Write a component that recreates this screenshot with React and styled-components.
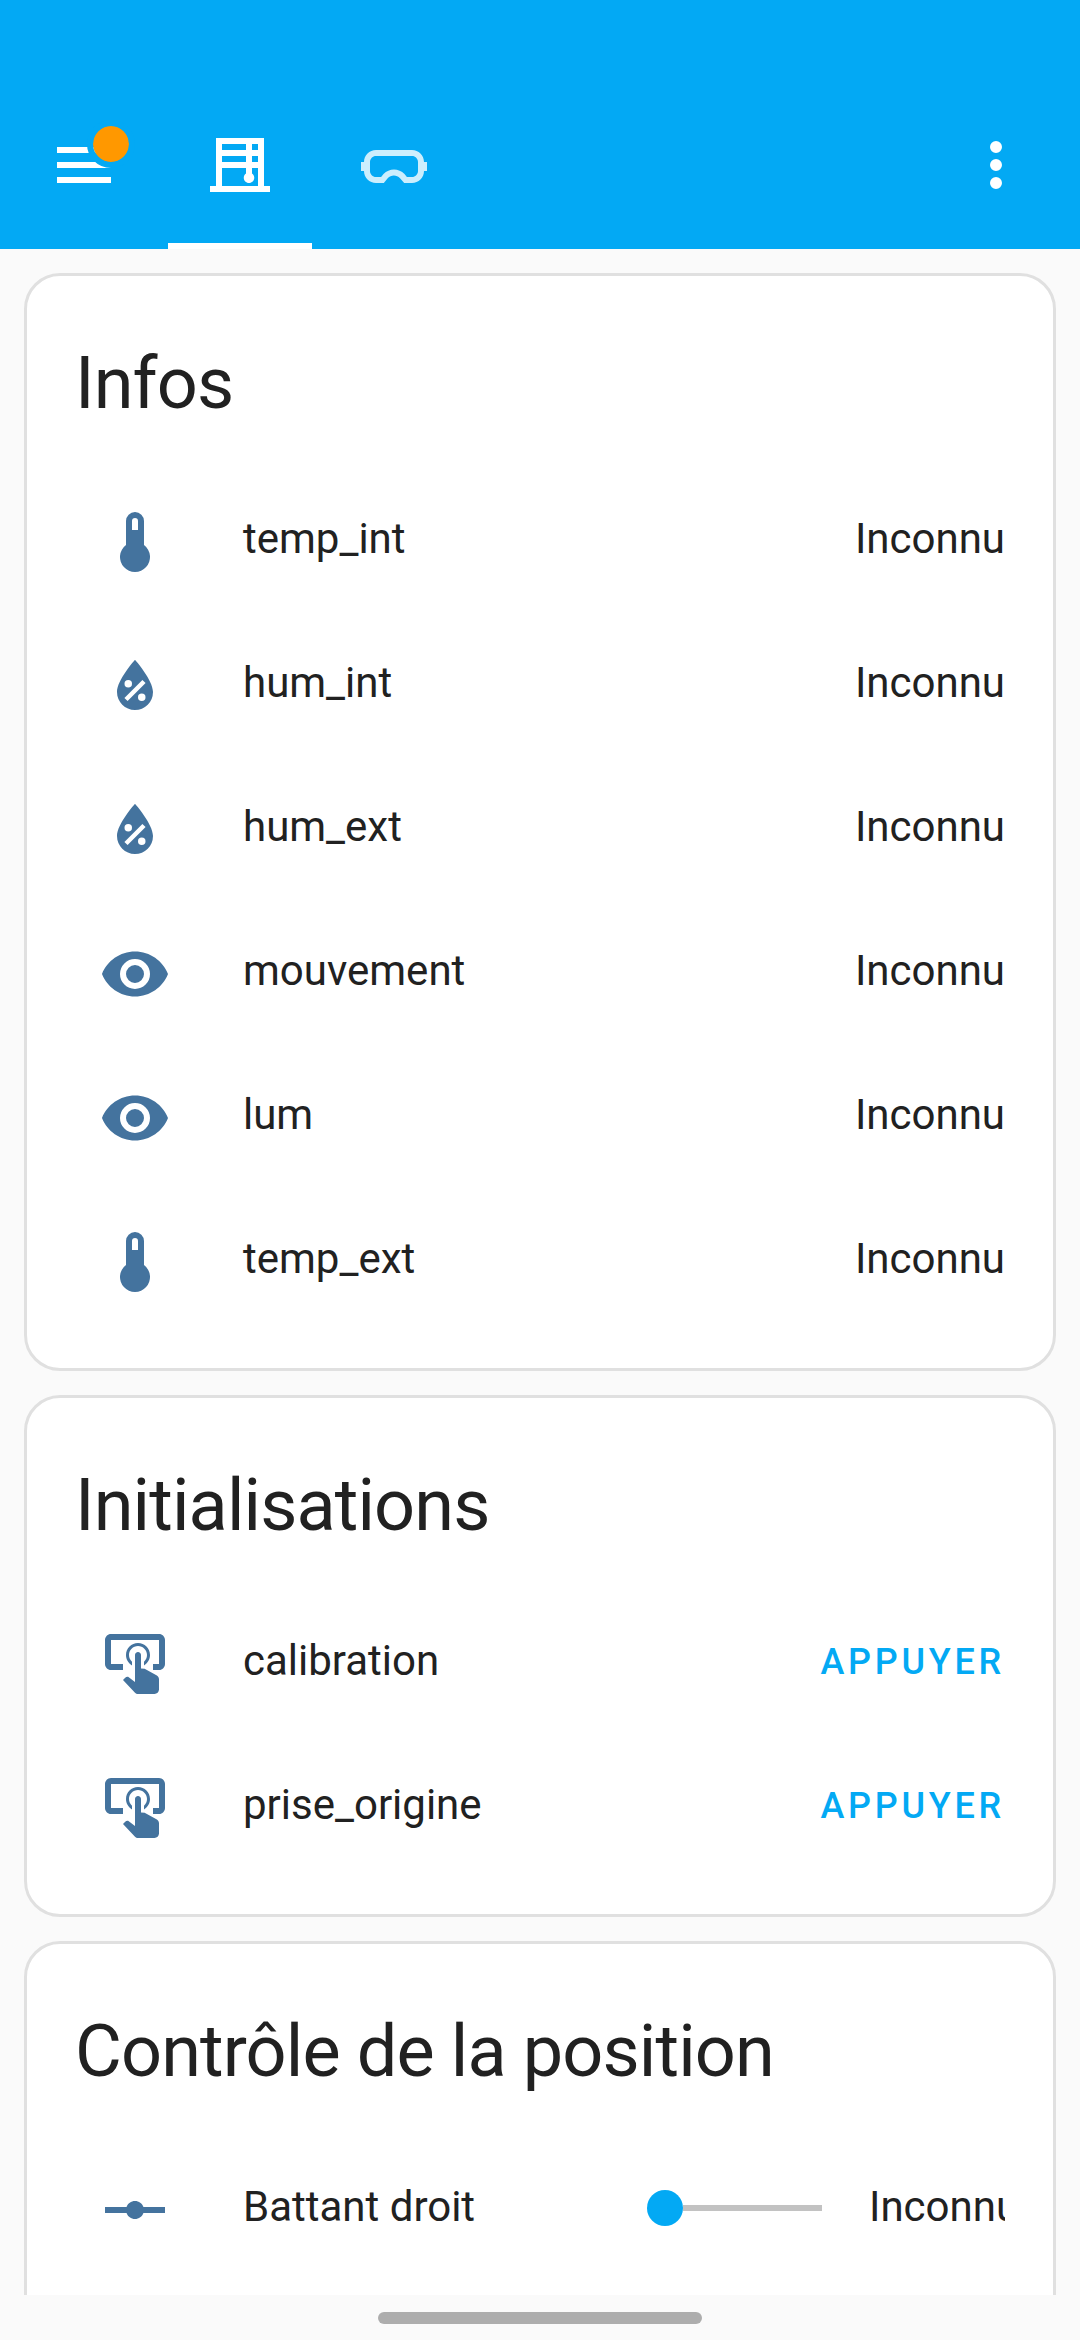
import React from 'react';
import styled, { createGlobalStyle } from 'styled-components';

const GlobalStyle = createGlobalStyle`
  * { box-sizing: border-box; }
  html, body { margin: 0; padding: 0; background: #fafafa; }
  body { font-family: Roboto, "Noto Sans", sans-serif; color: #212121; overflow: hidden; }
`;

const Screen = styled.div`
  width: 1080px;
  height: 2340px;
  display: flex;
  flex-direction: column;
  background: #fafafa;
`;

const Header = styled.header`
  flex: none;
  height: 249px;
  padding: 81px 12px 0;
  display: flex;
  align-items: stretch;
  background: #03a9f4;
  color: #fff;
`;

const IconButton = styled.button`
  position: relative;
  width: 144px;
  height: 168px;
  padding: 0;
  border: 0;
  background: none;
  color: inherit;
  display: flex;
  align-items: center;
  justify-content: center;
`;

const Badge = styled.span`
  position: absolute;
  top: 39px;
  left: 75px;
  width: 48px;
  height: 48px;
  border: 6px solid #03a9f4;
  border-radius: 50%;
  background: #ff9800;
  background-clip: padding-box;
`;

const Tabs = styled.nav`
  flex: 1;
  display: flex;
  gap: 10px;
  padding-left: 12px;
`;

const Tab = styled.button`
  width: 144px;
  padding: 6px 0 0;
  border: 0;
  border-bottom: 6px solid ${({ $active }) => ($active ? '#fff' : 'transparent')};
  background: none;
  color: ${({ $active }) => ($active ? '#fff' : 'rgba(255, 255, 255, 0.8)')};
  display: flex;
  align-items: center;
  justify-content: center;
`;

const Svg = styled.svg`
  display: block;
  width: 72px;
  height: 72px;
  fill: currentColor;
`;

const View = styled.main`
  flex: 1;
  min-height: 0;
  overflow: hidden;
  padding: 24px 24px 0;
  display: flex;
  flex-direction: column;
  gap: 24px;
`;

const CardBox = styled.section`
  flex: none;
  min-height: 522px;
  border: 3px solid #e0e0e0;
  border-radius: 36px;
  background: #fff;
  padding: 36px 48px 48px;
`;

const CardTitle = styled.h1`
  margin: 0 0 24px;
  font-size: 72px;
  font-weight: 400;
  line-height: 144px;
  letter-spacing: -0.012em;
  white-space: nowrap;
`;

const Rows = styled.div`
  display: flex;
  flex-direction: column;
  gap: 24px;
`;

const RowBox = styled.div`
  height: 120px;
  display: flex;
  align-items: center;
`;

const RowIcon = styled.div`
  flex: none;
  width: 120px;
  height: 120px;
  padding-top: 4px;
  display: flex;
  align-items: center;
  justify-content: center;
  color: #44739e;
`;

const Name = styled.div`
  flex: 1;
  padding: 0 0 2px 48px;
  font-size: 42px;
  line-height: 60px;
  white-space: nowrap;
`;

const Value = styled.div`
  padding-bottom: 2px;
  font-size: 42px;
  line-height: 60px;
  white-space: nowrap;
`;

const ClippedValue = styled(Value)`
  width: 136px;
  overflow: hidden;
`;

const PressButton = styled.button`
  padding: 0;
  border: 0;
  background: none;
  color: #03a9f4;
  font: 500 36px/60px Roboto, "Noto Sans", sans-serif;
  letter-spacing: 3.75px;
`;

const Slider = styled.div`
  width: 175px;
  margin-right: 47px;
  display: flex;
  align-items: center;
`;

const Knob = styled.span`
  flex: none;
  width: 36px;
  height: 36px;
  border-radius: 50%;
  background: #03a9f4;
`;

const Track = styled.span`
  flex: 1;
  height: 6px;
  background: #c2c2c2;
`;

const NavBar = styled.footer`
  flex: none;
  height: 45px;
  padding-top: 17px;
  display: flex;
  justify-content: center;
`;

const NavPill = styled.div`
  width: 324px;
  height: 12px;
  border-radius: 6px;
  background: #adadad;
`;

const PATHS = {
  menu: 'M3,6H21V8H3V6M3,11H21V13H3V11M3,16H21V18H3V16Z',
  dots: 'M12,16A2,2 0 0,1 14,18A2,2 0 0,1 12,20A2,2 0 0,1 10,18A2,2 0 0,1 12,16M12,10A2,2 0 0,1 14,12A2,2 0 0,1 12,14A2,2 0 0,1 10,12A2,2 0 0,1 12,10M12,4A2,2 0 0,1 14,6A2,2 0 0,1 12,8A2,2 0 0,1 10,6A2,2 0 0,1 12,4Z',
  blinds: 'M20 19V3H4V19H2V21H22V19H20M16 9H18V11H16V9M14 11H6V9H14V11M18 7H16V5H18V7M14 5V7H6V5H14M6 19V13H14V14.82C13.55 15.14 13.25 15.66 13.25 16.25C13.25 17.22 14.03 18 15 18S16.75 17.22 16.75 16.25C16.75 15.66 16.45 15.13 16 14.82V13H18V19H6Z',
  goggles: 'M18 7H6C3.8 7 2 8.8 2 11H1V14H2C2 16.2 3.8 18 6 18H8.6L9.9 16.4C11 15.2 12.9 15.2 14 16.4L15.4 18H18C20.2 18 22 16.2 22 14H23V11H22C22 8.8 20.2 7 18 7M20 14C20 15.1 19.1 16 18 16H16.3L15.5 15C13.6 13 10.4 13 8.5 15L7.7 16H6C4.9 16 4 15.1 4 14V11C4 9.9 4.9 9 6 9H18C19.1 9 20 9.9 20 11V14Z',
  thermometer: 'M15 13V5A3 3 0 0 0 9 5V13A5 5 0 1 0 15 13M12 4A1 1 0 0 1 13 5V8H11V5A1 1 0 0 1 12 4Z',
  humidity: 'M12,3.25C12,3.25 6,10 6,14C6,17.32 8.69,20 12,20A6,6 0 0,0 18,14C18,10 12,3.25 12,3.25M14.47,9.97L15.53,11.03L9.53,17.03L8.47,15.97M9.75,10A1.25,1.25 0 0,1 11,11.25A1.25,1.25 0 0,1 9.75,12.5A1.25,1.25 0 0,1 8.5,11.25A1.25,1.25 0 0,1 9.75,10M14.25,14.5A1.25,1.25 0 0,1 15.5,15.75A1.25,1.25 0 0,1 14.25,17A1.25,1.25 0 0,1 13,15.75A1.25,1.25 0 0,1 14.25,14.5Z',
  eye: 'M12,9A3,3 0 0,0 9,12A3,3 0 0,0 12,15A3,3 0 0,0 15,12A3,3 0 0,0 12,9M12,17A5,5 0 0,1 7,12A5,5 0 0,1 12,7A5,5 0 0,1 17,12A5,5 0 0,1 12,17M12,4.5C7,4.5 2.73,7.61 1,12C2.73,16.39 7,19.5 12,19.5C17,19.5 21.27,16.39 23,12C21.27,7.61 17,4.5 12,4.5Z',
  tap: 'M13 5C15.21 5 17 6.79 17 9C17 10.5 16.2 11.77 15 12.46V11.24C15.61 10.69 16 9.89 16 9C16 7.34 14.66 6 13 6S10 7.34 10 9C10 9.89 10.39 10.69 11 11.24V12.46C9.8 11.77 9 10.5 9 9C9 6.79 10.79 5 13 5M20 20.5C19.97 21.32 19.32 21.97 18.5 22H13C12.62 22 12.26 21.85 12 21.57L8 17.37L8.74 16.6C8.93 16.39 9.2 16.28 9.5 16.28H9.7L12 18V9C12 8.45 12.45 8 13 8S14 8.45 14 9V13.47L15.21 13.6L19.15 15.79C19.68 16.03 20 16.56 20 17.14V20.5M20 2H4C2.9 2 2 2.9 2 4V12C2 13.11 2.9 14 4 14H8V12L4 12L4 4H20L20 12H18V14H20V13.96L20.04 14C21.13 14 22 13.09 22 12V4C22 2.9 21.11 2 20 2Z',
  vertex: 'M22,11H14.82C14.4,9.84 13.3,9 12,9C10.7,9 9.6,9.84 9.18,11H2V13H9.18C9.6,14.16 10.7,15 12,15C13.3,15 14.4,14.16 14.82,13H22V11Z',
};

const Icon = ({ name }) => (
  <Svg viewBox="0 0 24 24" aria-hidden="true">
    <path d={PATHS[name]} />
  </Svg>
);

const Card = ({ title, children }) => (
  <CardBox>
    <CardTitle>{title}</CardTitle>
    <Rows>{children}</Rows>
  </CardBox>
);

const Row = ({ icon, name, children }) => (
  <RowBox>
    <RowIcon>
      <Icon name={icon} />
    </RowIcon>
    <Name>{name}</Name>
    {children}
  </RowBox>
);

const SENSORS = [
  { icon: 'thermometer', name: 'temp_int' },
  { icon: 'humidity', name: 'hum_int' },
  { icon: 'humidity', name: 'hum_ext' },
  { icon: 'eye', name: 'mouvement' },
  { icon: 'eye', name: 'lum' },
  { icon: 'thermometer', name: 'temp_ext' },
];

const BUTTONS = ['calibration', 'prise_origine'];

export default function App() {
  return (
    <Screen>
      <GlobalStyle />
      <Header>
        <IconButton aria-label="Menu">
          <Icon name="menu" />
          <Badge />
        </IconButton>
        <Tabs>
          <Tab $active>
            <Icon name="blinds" />
          </Tab>
          <Tab>
            <Icon name="goggles" />
          </Tab>
        </Tabs>
        <IconButton aria-label="Options">
          <Icon name="dots" />
        </IconButton>
      </Header>
      <View>
        <Card title="Infos">
          {SENSORS.map((s) => (
            <Row key={s.name} icon={s.icon} name={s.name}>
              <Value>Inconnu</Value>
            </Row>
          ))}
        </Card>
        <Card title="Initialisations">
          {BUTTONS.map((name) => (
            <Row key={name} icon="tap" name={name}>
              <PressButton>APPUYER</PressButton>
            </Row>
          ))}
        </Card>
        <Card title="Contrôle de la position">
          <Row icon="vertex" name="Battant droit">
            <Slider>
              <Knob />
              <Track />
            </Slider>
            <ClippedValue>Inconnu</ClippedValue>
          </Row>
        </Card>
      </View>
      <NavBar>
        <NavPill />
      </NavBar>
    </Screen>
  );
}
